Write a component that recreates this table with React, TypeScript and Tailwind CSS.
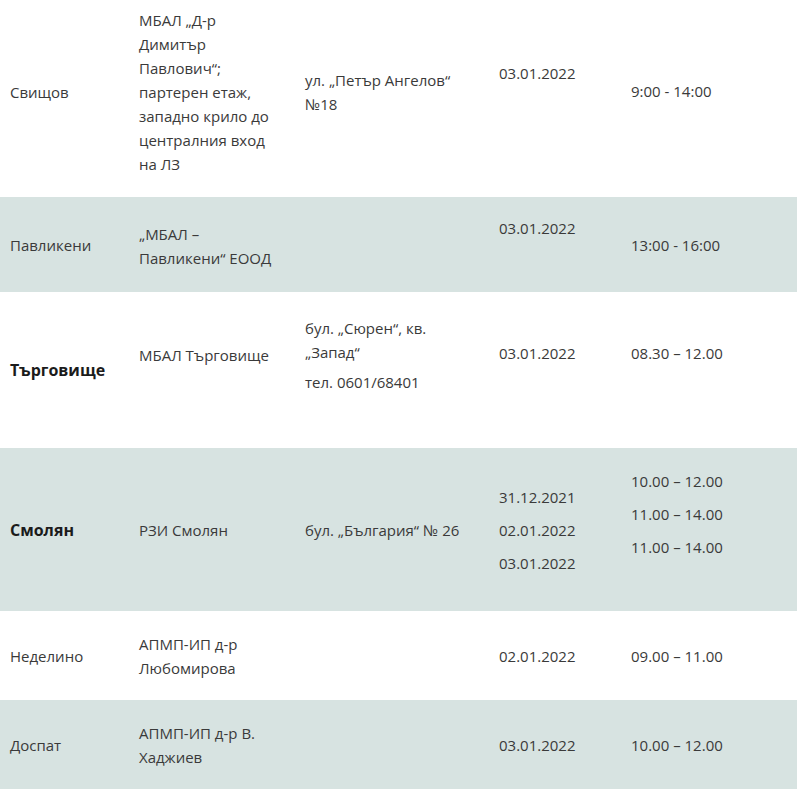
import { ReactNode } from 'react'

type Row = {
  h: string
  bg: string
  cells: ReactNode[]
}

const gray = 'bg-[#d7e3e1]'
const white = 'bg-white'

// lines stacked with a small gap between them (dates / hours with several entries)
function Stack({ items, gap, className = '' }: { items: string[]; gap: string; className?: string }) {
  return (
    <div className={`flex flex-col ${gap} ${className}`}>
      {items.map((t, i) => (
        <p key={i}>{t}</p>
      ))}
    </div>
  )
}

const ROWS: Row[] = [
  {
    h: 'h-[197px]',
    bg: white,
    cells: [
      <p className="pb-[14px]">Свищов</p>,
      <p className="pb-[13px]">
        МБАЛ „Д-р<br />Димитър<br />Павлович“;<br />партерен етаж,<br />западно крило до<br />централния вход<br />на ЛЗ
      </p>,
      <p className="pb-[13px]">
        ул. „Петър Ангелов“<br />№18
      </p>,
      <p className="pb-[51px]">03.01.2022</p>,
      <p className="pb-[16px]">9:00 - 14:00</p>,
    ],
  },
  {
    h: 'h-[95px]',
    bg: gray,
    cells: [
      <p>Павликени</p>,
      <p className="pt-[2px]">
        „МБАЛ –<br />Павликени“ ЕООД
      </p>,
      null,
      <p className="pb-[34px]">03.01.2022</p>,
      <p>13:00 - 16:00</p>,
    ],
  },
  {
    h: 'h-[156px]',
    bg: white,
    cells: [
      <p className="font-bold text-[16px] text-[#1b1b1b]">Търговище</p>,
      <p className="pb-[30px]">МБАЛ Търговище</p>,
      <div className="pb-[30px]">
        <p>
          бул. „Сюрен“, кв.<br />„Запад“
        </p>
        <p className="mt-[6px]">тел. 0601/68401</p>
      </div>,
      <p className="pb-[34px]">03.01.2022</p>,
      <p className="pb-[34px]">08.30 – 12.00</p>,
    ],
  },
  {
    h: 'h-[163px]',
    bg: gray,
    cells: [
      <p className="font-bold text-[16px] text-[#1b1b1b]">Смолян</p>,
      <p>РЗИ Смолян</p>,
      <p>бул. „България“ № 26</p>,
      <Stack items={['31.12.2021', '02.01.2022', '03.01.2022']} gap="gap-[9px]" />,
      <Stack items={['10.00 – 12.00', '11.00 – 14.00', '11.00 – 14.00']} gap="gap-[9px]" className="pb-[32px]" />,
    ],
  },
  {
    h: 'h-[89px]',
    bg: white,
    cells: [
      <p>Неделино</p>,
      <p>
        АПМП-ИП д-р<br />Любомирова
      </p>,
      null,
      <p>02.01.2022</p>,
      <p>09.00 – 11.00</p>,
    ],
  },
  {
    h: 'h-[89px]',
    bg: gray,
    cells: [
      <p>Доспат</p>,
      <p>
        АПМП-ИП д-р В.<br />Хаджиев
      </p>,
      null,
      <p>03.01.2022</p>,
      <p>10.00 – 12.00</p>,
    ],
  },
]

export default function App() {
  return (
    <div className="w-[800px] h-[791px] bg-white overflow-hidden font-['Open_Sans',sans-serif] text-[15px] leading-[24px] text-[#3a3a3a]">
      <table className="w-[797px] table-fixed border-collapse">
        <colgroup>
          <col className="w-[129px]" />
          <col className="w-[166px]" />
          <col className="w-[194px]" />
          <col className="w-[132px]" />
          <col className="w-[176px]" />
        </colgroup>
        <tbody>
          {ROWS.map((row, i) => (
            <tr key={i} className={`${row.h} ${row.bg}`}>
              {row.cells.map((c, j) => (
                <td key={j} className="align-middle pl-[10px] pr-[6px] py-0 whitespace-nowrap">
                  {c}
                </td>
              ))}
            </tr>
          ))}
        </tbody>
      </table>
    </div>
  )
}
